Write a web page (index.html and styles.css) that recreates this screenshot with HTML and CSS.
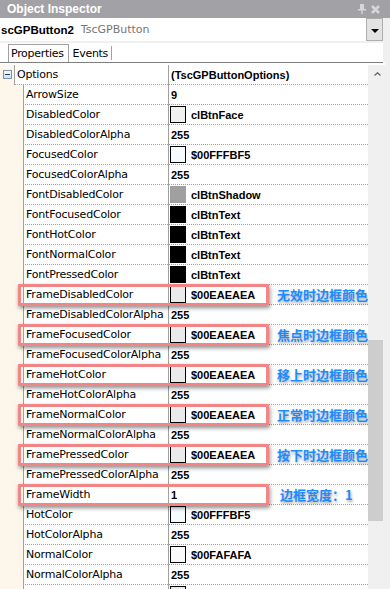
FILE: index.html
```html
<!DOCTYPE html>
<html lang="zh">
<head>
  <meta charset="UTF-8">
  <title>Object Inspector</title>
  <link rel="stylesheet" href="styles.css">
</head>
<body>

<div class="title">
  <span>Object Inspector</span>
  <div class="title-icons">
    <svg width="8" height="10" viewBox="0 0 8 10"><rect x="2" y="0" width="4" height="5" fill="#d6d6d6"/><rect x="0" y="5" width="8" height="1.5" fill="#d6d6d6"/><rect x="3.3" y="6" width="1.4" height="4" fill="#d6d6d6"/></svg>
    <svg width="9" height="9" viewBox="0 0 9 9"><path d="M1 1 L8 8 M8 1 L1 8" stroke="#d6d6d6" stroke-width="2.6"/></svg>
  </div>
</div>

<div class="combo">
  <span class="combo-name">scGPButton2</span>
  <span class="combo-type">TscGPButton</span>
  <div class="combo-btn"><span class="arrow"></span></div>
</div>

<div class="tabs">
  <div class="tab active">Properties</div>
  <div class="tab">Events</div>
</div>

<div class="content">
  <div class="grid">
    <div class="row top"><div class="gut"><span class="minus"></span></div><div class="name">Options</div><div class="val">(TscGPButtonOptions)</div></div>
    <div class="row"><div class="gut"></div><div class="name">ArrowSize</div><div class="val">9</div></div>
    <div class="row"><div class="gut"></div><div class="name">DisabledColor</div><div class="val"><span class="sw sw-face"></span>clBtnFace</div></div>
    <div class="row"><div class="gut"></div><div class="name">DisabledColorAlpha</div><div class="val">255</div></div>
    <div class="row"><div class="gut"></div><div class="name">FocusedColor</div><div class="val"><span class="sw sw-fbf5"></span>$00FFFBF5</div></div>
    <div class="row"><div class="gut"></div><div class="name">FocusedColorAlpha</div><div class="val">255</div></div>
    <div class="row"><div class="gut"></div><div class="name">FontDisabledColor</div><div class="val"><span class="sw sw-shadow"></span>clBtnShadow</div></div>
    <div class="row"><div class="gut"></div><div class="name">FontFocusedColor</div><div class="val"><span class="sw sw-black"></span>clBtnText</div></div>
    <div class="row"><div class="gut"></div><div class="name">FontHotColor</div><div class="val"><span class="sw sw-black"></span>clBtnText</div></div>
    <div class="row"><div class="gut"></div><div class="name">FontNormalColor</div><div class="val"><span class="sw sw-black"></span>clBtnText</div></div>
    <div class="row"><div class="gut"></div><div class="name">FontPressedColor</div><div class="val"><span class="sw sw-black"></span>clBtnText</div></div>
    <div class="row"><div class="gut"></div><div class="name">FrameDisabledColor</div><div class="val"><span class="sw sw-eaea"></span>$00EAEAEA</div><div class="mark"></div><div class="note">无效时边框颜色</div></div>
    <div class="row"><div class="gut"></div><div class="name">FrameDisabledColorAlpha</div><div class="val">255</div></div>
    <div class="row"><div class="gut"></div><div class="name">FrameFocusedColor</div><div class="val"><span class="sw sw-eaea"></span>$00EAEAEA</div><div class="mark"></div><div class="note">焦点时边框颜色</div></div>
    <div class="row"><div class="gut"></div><div class="name">FrameFocusedColorAlpha</div><div class="val">255</div></div>
    <div class="row"><div class="gut"></div><div class="name">FrameHotColor</div><div class="val"><span class="sw sw-eaea"></span>$00EAEAEA</div><div class="mark"></div><div class="note">移上时边框颜色</div></div>
    <div class="row"><div class="gut"></div><div class="name">FrameHotColorAlpha</div><div class="val">255</div></div>
    <div class="row"><div class="gut"></div><div class="name">FrameNormalColor</div><div class="val"><span class="sw sw-eaea"></span>$00EAEAEA</div><div class="mark"></div><div class="note">正常时边框颜色</div></div>
    <div class="row"><div class="gut"></div><div class="name">FrameNormalColorAlpha</div><div class="val">255</div></div>
    <div class="row"><div class="gut"></div><div class="name">FramePressedColor</div><div class="val"><span class="sw sw-eaea"></span>$00EAEAEA</div><div class="mark"></div><div class="note">按下时边框颜色</div></div>
    <div class="row"><div class="gut"></div><div class="name">FramePressedColorAlpha</div><div class="val">255</div></div>
    <div class="row"><div class="gut"></div><div class="name">FrameWidth</div><div class="val">1</div><div class="mark"></div><div class="note note-w">边框宽度：1</div></div>
    <div class="row"><div class="gut"></div><div class="name">HotColor</div><div class="val"><span class="sw sw-fbf5"></span>$00FFFBF5</div></div>
    <div class="row"><div class="gut"></div><div class="name">HotColorAlpha</div><div class="val">255</div></div>
    <div class="row"><div class="gut"></div><div class="name">NormalColor</div><div class="val"><span class="sw sw-fafa"></span>$00FAFAFA</div></div>
    <div class="row"><div class="gut"></div><div class="name">NormalColorAlpha</div><div class="val">255</div></div>
    <div class="row"><div class="gut"></div><div class="name"></div><div class="val"><span class="sw sw-eaea"></span></div></div>
  </div>
  <div class="scroll">
    <div class="scroll-up">
      <svg width="7" height="4" viewBox="0 0 7 4"><path d="M0.5 3.5 L3.5 0.8 L6.5 3.5" fill="none" stroke="#606060" stroke-width="1.2"/></svg>
    </div>
    <div class="thumb"></div>
  </div>
</div>

</body>
</html>
```

FILE: styles.css
```css
* {
  box-sizing: border-box;
}

html, body {
  margin: 0;
  padding: 0;
}

body {
  width: 390px;
  height: 589px;
  overflow: hidden;
  background: #f0f0f0;
  font-family: "DejaVu Sans", sans-serif;
  font-size: 11px;
  color: #000;
}

/* barra de titulo */
.title {
  height: 18px;
  background: #a2a2a6;
  color: #fff;
  font: bold 12px "Liberation Sans", sans-serif;
  display: flex;
  align-items: center;
  justify-content: space-between;
  padding: 0 10px 0 7px;
}

.title-icons {
  display: flex;
  align-items: center;
  gap: 5px;
}

/* selector de componente */
.combo {
  height: 25px;
  margin-right: 7px;
  background: #fff;
  border-bottom: 2px solid #f0f0f0;
  display: flex;
  align-items: center;
}

.combo-name {
  margin-left: 1px;
  font: bold 11.5px "Liberation Sans", sans-serif;
}

.combo-type {
  margin-left: 7px;
  color: #767676;
}

.combo-btn {
  margin-left: auto;
  width: 17px;
  height: 23px;
  background: #e3e3e3;
  border: 1px solid #adadad;
  display: flex;
  align-items: center;
  justify-content: center;
}

.arrow {
  width: 0;
  height: 0;
  border-left: 4px solid transparent;
  border-right: 4px solid transparent;
  border-top: 4px solid #000;
  margin-top: 2px;
}

/* pestañas */
.tabs {
  height: 20px;
  margin-right: 7px;
  background: #fff;
  border-bottom: 1px solid #7e7e7e;
  display: flex;
  align-items: flex-end;
  padding-left: 8px;
}

.tab {
  height: 18px;
  display: flex;
  align-items: center;
  letter-spacing: -0.3px;
  padding: 0 5px 0 4px;
}

.tab.active {
  border: 1px solid #a0a0a0;
  border-bottom: none;
  padding: 0 4px 0 2px;
}

.tab + .tab {
  height: 14px;
  margin-bottom: 2px;
  border-right: 1px solid #a0a0a0;
  padding: 0 3px 0 4px;
}

/* rejilla de propiedades */
.content {
  display: flex;
  height: 526px;
  margin-right: 5px;
  padding-top: 2px;
  background: #fff;
}

.grid {
  width: 368px;
  overflow: hidden;
  background: #fff;
}

.row {
  display: grid;
  grid-template-columns: 23px 145px 1fr;
  height: 20px;
}

.row.top {
  grid-template-columns: 14px 154px 1fr;
}

.gut {
  background: #fcf7ea;
}

.name, .val {
  border-left: 1px solid #a0a0a0;
  border-bottom: 1px dotted #a0a0a0;
  display: flex;
  align-items: center;
  white-space: nowrap;
  overflow: hidden;
}

.name {
  padding-left: 2px;
  letter-spacing: -0.2px;
}

.val {
  padding-left: 2px;
  gap: 5px;
  font: bold 11px "Liberation Sans", sans-serif;
}

.minus {
  display: flex;
  align-items: center;
  justify-content: center;
  width: 9px;
  height: 9px;
  margin: 5px 0 0 3px;
  border: 1px solid #7b93b2;
  background: linear-gradient(#f6f8fb, #d6e0ec);
}

.minus::after {
  content: "";
  width: 5px;
  height: 1px;
  background: #1e3c72;
}

.sw {
  width: 16px;
  height: 17px;
  margin-left: -1px;
  border: 1px solid #000;
  flex: none;
}

.sw-face { background: #f0f0f0; }
.sw-fbf5 { background: #f5fbff; }
.sw-eaea { background: #eaeaea; }
.sw-fafa { background: #fafafa; }
.sw-black { background: #000; }
.sw-shadow { background: #a0a0a0; border-color: #a0a0a0; }

/* anotaciones */
.row:has(.mark) {
  position: relative;
}

.mark {
  position: absolute;
  z-index: 1;
  left: 18px;
  top: -1px;
  width: 251px;
  height: 22px;
  border: 3px solid #f28585;
  border-radius: 1px;
  box-shadow: 1px 2px 4px rgba(0, 0, 0, 0.45);
}

.note {
  position: absolute;
  z-index: 1;
  left: 277px;
  top: 0;
  line-height: 19px;
  font: bold 13px "Noto Sans CJK SC", sans-serif;
  color: #1a8cff;
  text-shadow: 1px 2px 3px rgba(0, 0, 0, 0.35);
}

.note-w {
  left: 280px;
}

/* barra de desplazamiento */
.scroll {
  width: 17px;
  background: #f0f0f0;
  display: flex;
  flex-direction: column;
}

.scroll-up {
  height: 17px;
  display: flex;
  align-items: center;
  justify-content: center;
  padding-left: 2px;
}

.thumb {
  width: 15px;
  height: 181px;
  margin-top: 258px;
  background: #cdcdcd;
}
```
